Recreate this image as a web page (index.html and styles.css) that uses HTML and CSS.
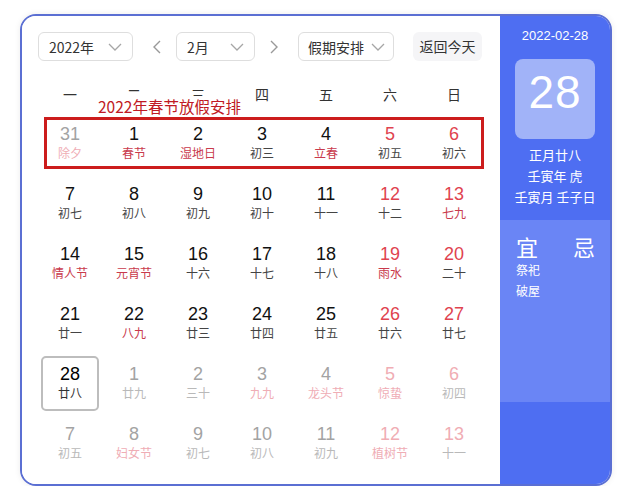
FILE: index.html
```html
<!DOCTYPE html>
<html lang="zh-CN">
<head>
<meta charset="utf-8">
<title>万年历</title>
<link rel="stylesheet" href="styles.css">
</head>
<body>
<div class="card">
  <div class="main">
    <div class="toolbar">
      <div class="select sel-year"><span>2022年</span><svg class="chev" viewBox="0 0 14 8" width="14" height="8"><path d="M1 1 L7 7 L13 1" fill="none" stroke="#a6a6a6" stroke-width="1.3"/></svg></div>
      <svg class="arrow arrow-l" viewBox="0 0 8 14" width="8" height="14"><path d="M7 1 L1 7 L7 13" fill="none" stroke="#999" stroke-width="1.4"/></svg>
      <div class="select sel-month"><span>2月</span><svg class="chev" viewBox="0 0 14 8" width="14" height="8"><path d="M1 1 L7 7 L13 1" fill="none" stroke="#a6a6a6" stroke-width="1.3"/></svg></div>
      <svg class="arrow arrow-r" viewBox="0 0 8 14" width="8" height="14"><path d="M1 1 L7 7 L1 13" fill="none" stroke="#999" stroke-width="1.4"/></svg>
      <div class="select sel-holiday"><span>假期安排</span><svg class="chev" viewBox="0 0 14 8" width="14" height="8"><path d="M1 1 L7 7 L13 1" fill="none" stroke="#a6a6a6" stroke-width="1.3"/></svg></div>
      <div class="btn-today">返回今天</div>
    </div>
    <div class="weekdays">
      <span>一</span><span>二</span><span>三</span><span>四</span><span>五</span><span>六</span><span>日</span>
    </div>
    <div class="days">
      <div class="day other"><b>31</b><i class="fest">除夕</i></div>
      <div class="day"><b>1</b><i class="fest">春节</i></div>
      <div class="day"><b>2</b><i class="fest">湿地日</i></div>
      <div class="day"><b>3</b><i>初三</i></div>
      <div class="day"><b>4</b><i class="fest">立春</i></div>
      <div class="day wk"><b>5</b><i>初五</i></div>
      <div class="day wk"><b>6</b><i>初六</i></div>

      <div class="day"><b>7</b><i>初七</i></div>
      <div class="day"><b>8</b><i>初八</i></div>
      <div class="day"><b>9</b><i>初九</i></div>
      <div class="day"><b>10</b><i>初十</i></div>
      <div class="day"><b>11</b><i>十一</i></div>
      <div class="day wk"><b>12</b><i>十二</i></div>
      <div class="day wk"><b>13</b><i class="fest">七九</i></div>

      <div class="day"><b>14</b><i class="fest">情人节</i></div>
      <div class="day"><b>15</b><i class="fest">元宵节</i></div>
      <div class="day"><b>16</b><i>十六</i></div>
      <div class="day"><b>17</b><i>十七</i></div>
      <div class="day"><b>18</b><i>十八</i></div>
      <div class="day wk"><b>19</b><i class="fest">雨水</i></div>
      <div class="day wk"><b>20</b><i>二十</i></div>

      <div class="day"><b>21</b><i>廿一</i></div>
      <div class="day"><b>22</b><i class="fest">八九</i></div>
      <div class="day"><b>23</b><i>廿三</i></div>
      <div class="day"><b>24</b><i>廿四</i></div>
      <div class="day"><b>25</b><i>廿五</i></div>
      <div class="day wk"><b>26</b><i>廿六</i></div>
      <div class="day wk"><b>27</b><i>廿七</i></div>

      <div class="day today"><b>28</b><i>廿八</i></div>
      <div class="day other"><b>1</b><i>廿九</i></div>
      <div class="day other"><b>2</b><i>三十</i></div>
      <div class="day other"><b>3</b><i class="fest">九九</i></div>
      <div class="day other"><b>4</b><i class="fest">龙头节</i></div>
      <div class="day other wk"><b>5</b><i class="fest">惊蛰</i></div>
      <div class="day other wk"><b>6</b><i>初四</i></div>

      <div class="day other"><b>7</b><i>初五</i></div>
      <div class="day other"><b>8</b><i class="fest">妇女节</i></div>
      <div class="day other"><b>9</b><i>初七</i></div>
      <div class="day other"><b>10</b><i>初八</i></div>
      <div class="day other"><b>11</b><i>初九</i></div>
      <div class="day other wk"><b>12</b><i class="fest">植树节</i></div>
      <div class="day other wk"><b>13</b><i>十一</i></div>
    </div>
    <div class="note">2022年春节放假安排</div>
    <div class="mark"></div>
  </div>
  <div class="side">
    <div class="side-top">
      <div class="side-date">2022-02-28</div>
      <div class="side-big">28</div>
      <div class="side-lunar">
        <div>正月廿八</div>
        <div>壬寅年 虎</div>
        <div>壬寅月 壬子日</div>
      </div>
    </div>
    <div class="side-mid">
      <div class="yj">
        <div class="col">
          <div class="yj-title">宜</div>
          <div class="yj-item">祭祀</div>
          <div class="yj-item">破屋</div>
        </div>
        <div class="col">
          <div class="yj-title">忌</div>
        </div>
      </div>
    </div>
    <div class="side-bottom"></div>
  </div>
</div>
</body>
</html>
```

FILE: styles.css
```css
* { box-sizing: border-box; }
html, body { margin: 0; padding: 0; background: #fff; }
body {
  font-family: "Noto Sans CJK SC", "Liberation Sans", sans-serif;
  color: #333;
}
.card {
  position: relative;
  margin: 14px 0 0 20px;
  width: 592px;
  height: 472px;
  border: 2px solid #5b6fd3;
  border-radius: 16px;
  overflow: hidden;
  display: flex;
  box-shadow: 0 0 6px rgba(0,0,0,0.08);
}
.main {
  width: 478px;
  padding: 16px 14px 0 16px;
  background: #fff;
}
.toolbar {
  display: flex;
  align-items: center;
  height: 29px;
}
.select {
  height: 29px;
  border: 1px solid #dedede;
  border-radius: 6px;
  display: flex;
  align-items: center;
  justify-content: space-between;
  padding: 0 10px 0 10px;
  font-size: 14px;
  color: #333;
  line-height: 20px;
}
.sel-year { width: 95px; }
.sel-month { width: 79px; }
.sel-holiday { width: 96px; padding-left: 9px; padding-right: 8px; }
.chev { display: block; }
.arrow { display: block; }
.arrow-l { margin: 0 15px 0 20px; }
.arrow-r { margin: 0 20px 0 15px; }
.btn-today {
  margin-left: 19px;
  width: 69px;
  height: 29px;
  border-radius: 6px;
  background: #f5f5f7;
  font-size: 14px;
  line-height: 29px;
  text-align: center;
  color: #333;
}
.weekdays {
  display: grid;
  grid-template-columns: repeat(7, 64px);
  margin-top: 19px;
  height: 28px;
  line-height: 28px;
  font-size: 14px;
  color: #333;
  text-align: center;
}
.days {
  margin-top: 8px;
  display: grid;
  grid-template-columns: repeat(7, 64px);
  grid-auto-rows: 55px;
  row-gap: 5px;
  text-align: center;
}
.day {
  display: flex;
  flex-direction: column;
  align-items: center;
  padding-top: 8px;
}
.day b {
  font-family: "Liberation Sans", Arial, sans-serif;
  font-weight: normal;
  font-size: 18px;
  line-height: 20px;
  color: #111;
}
.day i {
  font-style: normal;
  font-size: 12px;
  line-height: 18px;
  color: #444;
}
.day i.fest { color: #c93a4c; }
.day.wk b { color: #e0434f; }
.day.other b { color: #a3a3a3; }
.day.other i { color: #b9b9b9; }
.day.other i.fest { color: #efadb5; }
.day.other.wk b { color: #f0adb4; }
.day.today {
  width: 58px;
  margin-left: 3px;
  border: 2px solid #bdbdbd;
  border-radius: 5px;
  padding-top: 6px;
}
.day.today b { color: #000; }
.day.today i { color: #333; }
.note {
  position: absolute;
  left: 75px;
  top: 81px;
  padding: 0 1px;
  background: #fff;
  font-size: 15.5px;
  line-height: 18px;
  color: #c01a24;
}
.mark {
  position: absolute;
  left: 22px;
  top: 101px;
  width: 440px;
  height: 52px;
  border: 3px solid #cc1c1c;
}
.side {
  flex: 1;
  display: flex;
  flex-direction: column;
  color: #fff;
}
.side-top {
  height: 204px;
  background: #4e6ef2;
  display: flex;
  flex-direction: column;
  align-items: center;
  padding-top: 10px;
}
.side-date {
  font-family: "Liberation Sans", Arial, sans-serif;
  font-size: 13px;
  line-height: 20px;
}
.side-big {
  margin-top: 13px;
  width: 80px;
  height: 80px;
  border-radius: 8px;
  background: #a1b3f8;
  font-family: "Liberation Sans", Arial, sans-serif;
  font-size: 46px;
  line-height: 66px;
  text-align: center;
  letter-spacing: 1px;
}
.side-lunar {
  margin-top: 5px;
  font-size: 13px;
  line-height: 21px;
  text-align: center;
}
.side-mid {
  height: 182px;
  background: #6a85f5;
  padding: 13px 0 0 16px;
}
.yj { display: flex; gap: 33px; }
.yj-title { font-size: 22px; line-height: 26px; }
.yj-item { font-size: 12px; line-height: 21px; }
.side-bottom { flex: 1; background: #4e6ef2; }
```
